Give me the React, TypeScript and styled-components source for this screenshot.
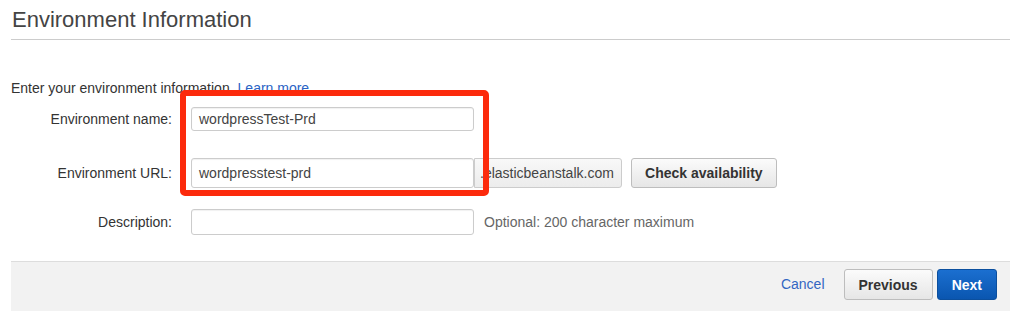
import React from 'react';
import styled, {createGlobalStyle} from "styled-components";

const GlobalStyle = createGlobalStyle`
    body {
        margin: 0;
        background: #fff;
        font-family: "Liberation Sans", Arial, sans-serif;
        color: #444;
    }
`;

const StyledPage = styled.div`
    position: relative;
    width: 1010px;
    height: 311px;
    overflow: hidden;
    padding-left: 11px;
    box-sizing: border-box;
`;

const StyledHeader = styled.h1`
    margin: 0;
    padding: 7px 0 7px 1px;
    font-size: 22px;
    line-height: 25px;
    font-weight: normal;
    color: #444;
    border-bottom: 1px solid #ccc;
`;

const StyledIntro = styled.p`
    margin: 40px 0 0;
    font-size: 14px;
    line-height: 16px;
    color: #333;
`;

const StyledLink = styled.a`
    color: #2a64c5;
    text-decoration: none;
    margin-left: 4px;
`;

const StyledRow = styled.div<{ $top: number; $height: number }>`
    display: grid;
    grid-template-columns: 161px auto;
    column-gap: 19px;
    align-items: center;
    margin-top: ${p => p.$top}px;
    height: ${p => p.$height}px;
`;

const StyledLabel = styled.label`
    text-align: right;
    font-size: 14px;
    color: #333;
`;

const StyledFieldGroup = styled.div`
    display: flex;
    align-items: center;
    height: 100%;
`;

const StyledInput = styled.div<{ $height: number }>`
    width: 283px;
    height: ${p => p.$height}px;
    box-sizing: border-box;
    border: 1px solid #ccc;
    border-radius: 3px;
    background: #fff;
    box-shadow: inset 0 1px 1px rgba(0, 0, 0, 0.06);
    padding: 0 7px;
    display: flex;
    align-items: center;
    font-size: 14px;
    color: #444;
`;

const StyledAddon = styled.div`
    height: 30px;
    box-sizing: border-box;
    border: 1px solid #ccc;
    border-radius: 0 3px 3px 0;
    background: linear-gradient(#f8f8f8, #ececec);
    padding: 0 7px 0 5px;
    display: flex;
    align-items: center;
    font-size: 14px;
    color: #444;
`;

const StyledButton = styled.button<{ $primary?: boolean }>`
    height: 31px;
    box-sizing: border-box;
    border-radius: 3px;
    border: 1px solid ${p => (p.$primary ? "#0b4f9e" : "#bdbdbd")};
    background: ${p => (p.$primary
        ? "linear-gradient(#1b6fd0, #0a56b0)"
        : "linear-gradient(#fbfbfb, #e6e6e6)")};
    color: ${p => (p.$primary ? "#fff" : "#333")};
    font-family: "Liberation Sans", Arial, sans-serif;
    font-size: 14px;
    font-weight: bold;
    padding: 0 14px;
    cursor: pointer;
`;

const StyledCheckButton = styled(StyledButton)`
    height: 30px;
    margin-left: 9px;
    width: 146px;
    padding: 0;
`;

const StyledHint = styled.span`
    margin-left: 10px;
    font-size: 14px;
    color: #666;
`;

const StyledFooter = styled.div`
    margin-top: 26px;
    height: 50px;
    box-sizing: border-box;
    border-top: 1px solid #ddd;
    background: #f2f2f2;
    display: flex;
    justify-content: flex-end;
    align-items: flex-start;
    padding: 7px 13px 0 0;
    gap: 4px;
`;

const StyledCancel = styled.a`
    color: #3266c2;
    font-size: 14px;
    line-height: 31px;
    margin-right: 15px;
    text-decoration: none;
`;

const StyledHighlight = styled.div`
    position: absolute;
    left: 180px;
    top: 90px;
    width: 309px;
    height: 106px;
    box-sizing: border-box;
    border: 6px solid #fc2a0c;
    border-radius: 5px;
    pointer-events: none;
`;

const App = () => {
    return (
        <StyledPage>
            <GlobalStyle/>
            <StyledHeader>Environment Information</StyledHeader>
            <StyledIntro>
                Enter your environment information.
                <StyledLink href="#">Learn more</StyledLink>
            </StyledIntro>

            <StyledRow $top={11} $height={24}>
                <StyledLabel>Environment name:</StyledLabel>
                <StyledFieldGroup>
                    <StyledInput $height={24}>wordpressTest-Prd</StyledInput>
                </StyledFieldGroup>
            </StyledRow>

            <StyledRow $top={27} $height={30}>
                <StyledLabel>Environment URL:</StyledLabel>
                <StyledFieldGroup>
                    <StyledInput $height={30}>wordpresstest-prd</StyledInput>
                    <StyledAddon>.elasticbeanstalk.com</StyledAddon>
                    <StyledCheckButton>Check availability</StyledCheckButton>
                </StyledFieldGroup>
            </StyledRow>

            <StyledRow $top={21} $height={26}>
                <StyledLabel>Description:</StyledLabel>
                <StyledFieldGroup>
                    <StyledInput $height={26}/>
                    <StyledHint>Optional: 200 character maximum</StyledHint>
                </StyledFieldGroup>
            </StyledRow>

            <StyledFooter>
                <StyledCancel href="#">Cancel</StyledCancel>
                <StyledButton>Previous</StyledButton>
                <StyledButton $primary>Next</StyledButton>
            </StyledFooter>

            <StyledHighlight/>
        </StyledPage>
    );
};

export default App;
